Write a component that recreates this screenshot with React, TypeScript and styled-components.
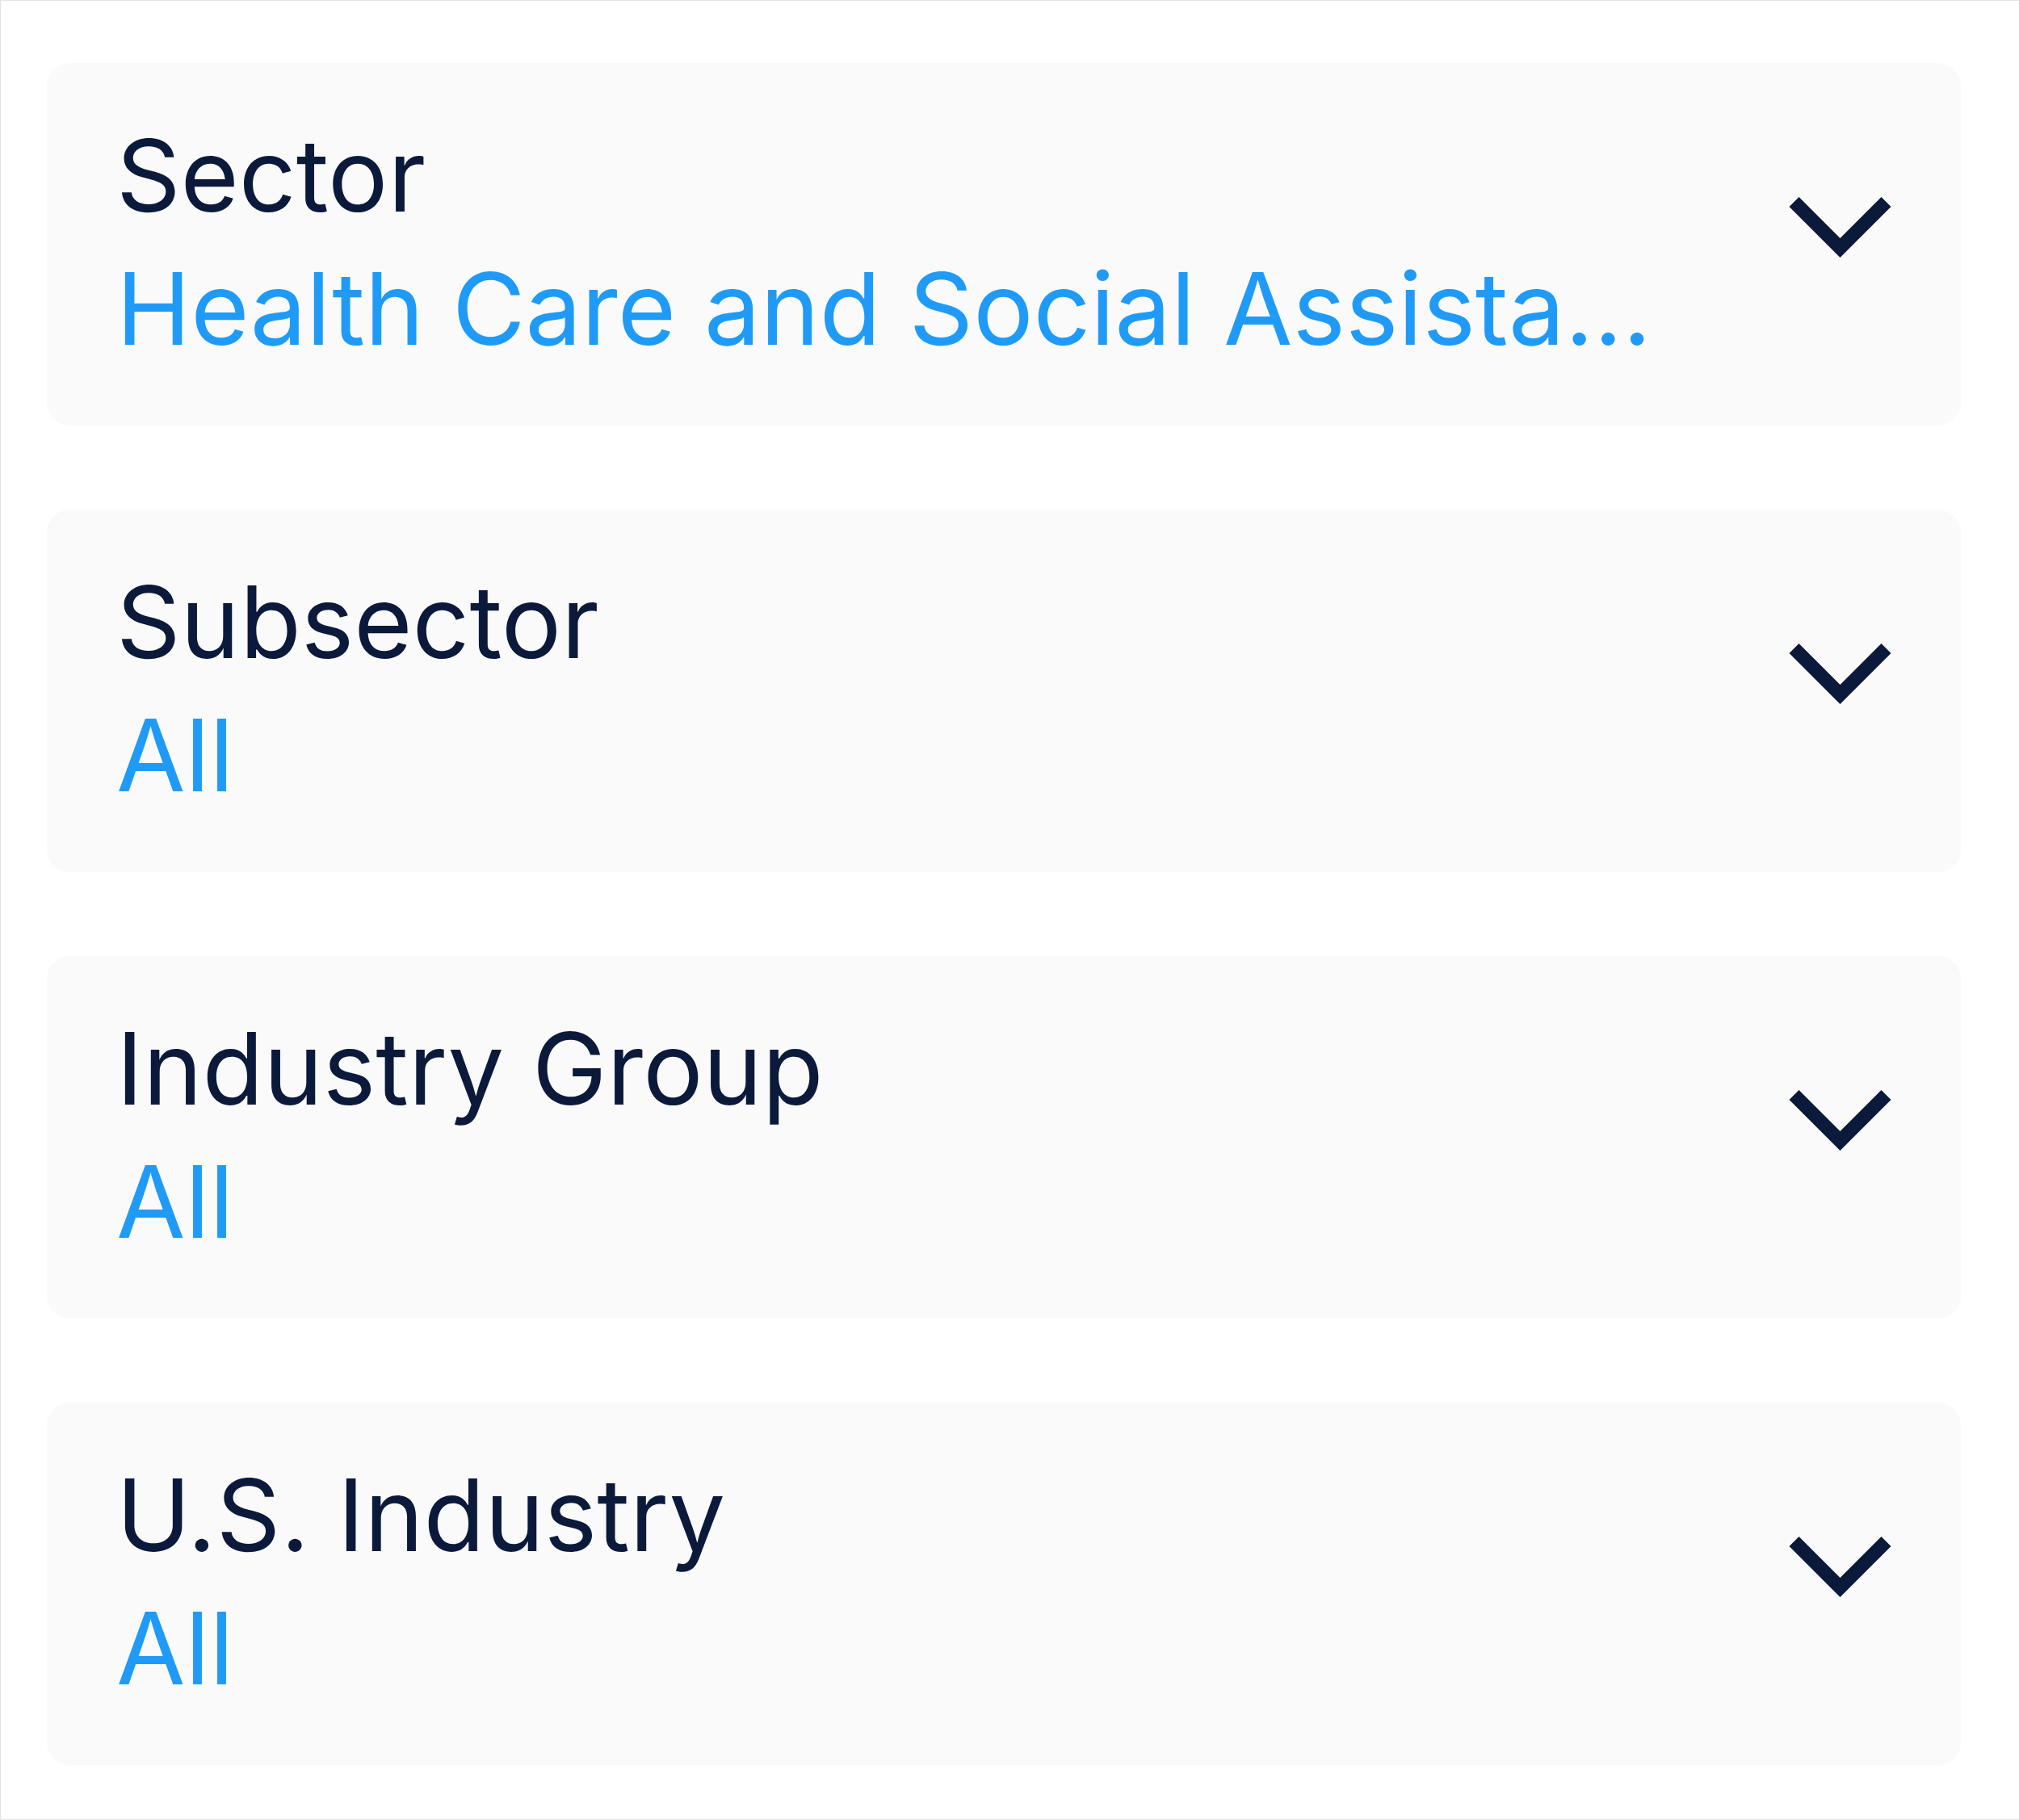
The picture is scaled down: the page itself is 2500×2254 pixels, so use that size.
import React from "react";
import styled, { createGlobalStyle } from "styled-components";

const GlobalStyle = createGlobalStyle`
  html, body {
    margin: 0;
    padding: 0;
    background: #ffffff;
  }
  * {
    box-sizing: border-box;
  }
`;

const Panel = styled.div`
  width: 2500px;
  height: 2254px;
  border-top: 1px solid #e4e4e4;
  border-left: 1px solid #e4e4e4;
  border-bottom: 1px solid #e4e4e4;
  padding: 77px 72px 0 57px;
  display: flex;
  flex-direction: column;
  gap: 104px;
  background: #ffffff;
  font-family: Inter, "Noto Sans", "Liberation Sans", sans-serif;
`;

const FilterCard = styled.button`
  display: flex;
  flex-direction: row;
  align-items: center;
  gap: 170px;
  width: 100%;
  height: 449px;
  padding: 57px 86px 62px 86px;
  border: none;
  border-radius: 28px;
  background: #fafafa;
  text-align: left;
  font-family: inherit;
  cursor: pointer;
`;

const TextColumn = styled.div`
  flex: 1;
  min-width: 0;
  display: flex;
  flex-direction: column;
`;

const Label = styled.span`
  font-size: 124px;
  line-height: 165px;
  font-weight: 400;
  color: #0b1a3b;
  white-space: nowrap;
`;

const Value = styled.span`
  font-size: 124px;
  line-height: 165px;
  font-weight: 400;
  color: #1f9bf7;
  white-space: nowrap;
  overflow: hidden;
  text-overflow: ellipsis;
`;

const ChevronWrap = styled.span`
  flex: none;
  display: flex;
  margin-bottom: 38px;
`;

const Chevron = () => (
  <svg width="127" height="75" viewBox="0 0 127 75" fill="none">
    <polyline
      points="6.5,6 63.5,63 120.5,6"
      stroke="#0b1a3b"
      strokeWidth="17"
      strokeLinecap="butt"
      strokeLinejoin="miter"
    />
  </svg>
);

const filters = [
  { label: "Sector", value: "Health Care and Social Assistance" },
  { label: "Subsector", value: "All" },
  { label: "Industry Group", value: "All" },
  { label: "U.S. Industry", value: "All" },
];

export default function App() {
  return (
    <>
      <GlobalStyle />
      <Panel>
        {filters.map((f) => (
          <FilterCard key={f.label} type="button">
            <TextColumn>
              <Label>{f.label}</Label>
              <Value>{f.value}</Value>
            </TextColumn>
            <ChevronWrap>
              <Chevron />
            </ChevronWrap>
          </FilterCard>
        ))}
      </Panel>
    </>
  );
}
